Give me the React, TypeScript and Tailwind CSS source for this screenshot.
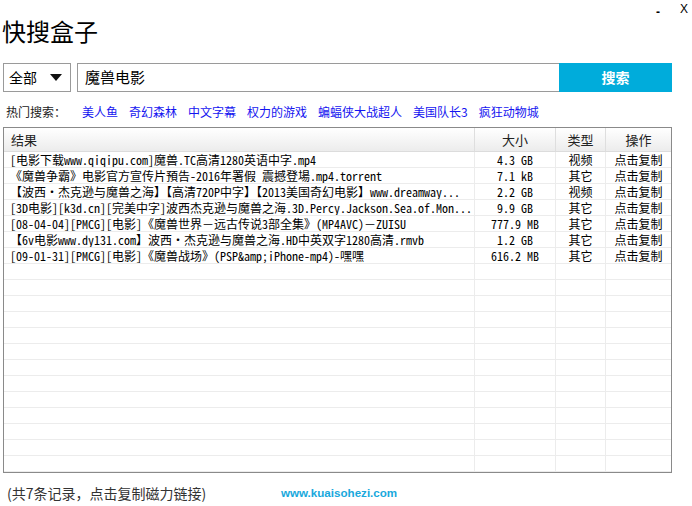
import React from "react";

const rows: [string, string, string][] = [
  ["[电影下载www.qiqipu.com]魔兽.TC高清1280英语中字.mp4", "4.3 GB", "视频"],
  ["《魔兽争霸》电影官方宣传片預告-2016年署假 震撼登場.mp4.torrent", "7.1 kB", "其它"],
  ["【波西·杰克逊与魔兽之海】【高清720P中字】【2013美国奇幻电影】www.dreamway...", "2.2 GB", "视频"],
  ["[3D电影][k3d.cn][完美中字]波西杰克逊与魔兽之海.3D.Percy.Jackson.Sea.of.Mon...", "9.9 GB", "其它"],
  ["[08-04-04][PMCG][电影]《魔兽世界－远古传说3部全集》(MP4AVC)－ZUISU", "777.9 MB", "其它"],
  ["【6v电影www.dy131.com】波西·杰克逊与魔兽之海.HD中英双字1280高清.rmvb", "1.2 GB", "其它"],
  ["[09-01-31][PMCG][电影]《魔兽战场》(PSP&amp;iPhone-mp4)-嘿嘿", "616.2 MB", "其它"],
];

const hot = ["美人鱼", "奇幻森林", "中文字幕", "权力的游戏", "蝙蝠侠大战超人", "美国队长3", "疯狂动物城"];

const mono = "font-['Noto_Sans_Mono_CJK_SC','Noto_Sans_CJK_SC',monospace]";

export default function App() {
  const all = [...rows, ...Array.from({ length: 13 }, () => ["", "", ""] as [string, string, string])];
  return (
    <div className="w-[692px] h-[506px] bg-white relative overflow-hidden font-['Noto_Sans_CJK_SC',sans-serif] text-black">
      <div className="absolute top-[2px] right-[4px] flex items-start gap-[20px] text-[12px] font-['Liberation_Sans',sans-serif] leading-[14px]">
        <span className="font-bold mt-[3px]">-</span>
        <span>X</span>
      </div>
      <div className="h-[60px] pt-[16px] pl-[2px]">
        <div className="text-[24px] leading-[30px]">快搜盒子</div>
      </div>
      <div className="flex h-[29px] mt-[3px] ml-[3px]">
        <div className="w-[68px] h-full border border-[#9a9a9a] flex items-center pl-[5px] pr-[8px] justify-between">
          <span className="text-[14px]">全部</span>
          <svg width="12" height="8" viewBox="0 0 12 8"><path d="M0 0h12L6 7z" fill="#111" /></svg>
        </div>
        <div className="ml-[6px] w-[482px] h-full border border-[#9a9a9a] border-r-0 flex items-center pl-[7px]">
          <span className="text-[15px]">魔兽电影</span>
        </div>
        <div className="w-[113px] h-full bg-[#00acdb] flex items-center justify-center text-white font-bold text-[14px]">搜索</div>
      </div>
      <div className="flex items-center h-[20px] mt-[10px] pl-[6px] text-[12px]">
        <span className="text-[#222] mr-[16px]">热门搜索：</span>
        <div className="flex gap-[11px] text-[#1414f0]">
          {hot.map((h) => (
            <span key={h}>{h}</span>
          ))}
        </div>
      </div>
      <div className="ml-[3px] mt-[5px] w-[669px] border border-[#8a8a8a]">
        <div className="flex h-[24px] border-b border-[#dcdcdc] bg-gradient-to-b from-[#ffffff] to-[#ececec] text-[13px] text-[#222]">
          <div className="w-[471px] border-r border-[#dedede] flex items-center pl-[7px]">结果</div>
          <div className="w-[81px] border-r border-[#dedede] flex items-center justify-center">大小</div>
          <div className="w-[50px] border-r border-[#dedede] flex items-center justify-center">类型</div>
          <div className="w-[65px] flex items-center justify-center">操作</div>
        </div>
        {all.map((r, i) => (
          <div key={i} className={`flex h-[16px] border-b border-[#ececec] text-[12px] leading-[15px] ${mono}`}>
            <div className="w-[471px] border-r border-[#ececec] pl-[6px] whitespace-nowrap overflow-hidden">{r[0]}</div>
            <div className="w-[81px] border-r border-[#ececec] text-center whitespace-pre">{r[1]}</div>
            <div className="w-[50px] border-r border-[#ececec] text-center">{r[2]}</div>
            <div className="w-[65px] text-center">{r[0] ? "点击复制" : ""}</div>
          </div>
        ))}
      </div>
      <div className="flex items-center h-[24px] mt-[8px] pl-[7px]">
        <span className="text-[14px] text-[#333] w-[274px]">(共7条记录，点击复制磁力链接)</span>
        <span className="text-[11.6px] font-bold text-[#19a8dc] font-['Liberation_Sans',sans-serif]">www.kuaisohezi.com</span>
      </div>
    </div>
  );
}
